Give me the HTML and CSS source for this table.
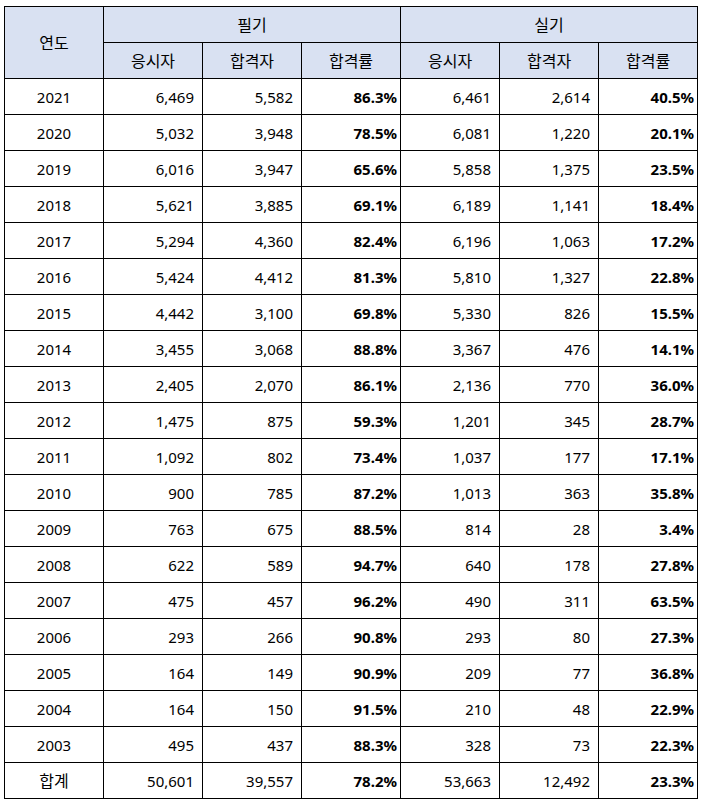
FILE: index.html
```html
<!DOCTYPE html>
<html lang="ko">
<head>
<meta charset="utf-8">
<title>연도별 합격률</title>
<link rel="stylesheet" href="styles.css">
</head>
<body>
<table class="stats">
  <colgroup>
    <col class="c"><col class="c"><col class="c"><col class="c"><col class="c"><col class="c"><col class="c">
  </colgroup>
  <thead>
    <tr>
      <th rowspan="2" class="year-h">연도</th>
      <th colspan="3">필기</th>
      <th colspan="3">실기</th>
    </tr>
    <tr>
      <th>응시자</th><th>합격자</th><th>합격률</th>
      <th>응시자</th><th>합격자</th><th>합격률</th>
    </tr>
  </thead>
  <tbody>
    <tr><td class="yr">2021</td><td class="n">6,469</td><td class="n">5,582</td><td class="p">86.3%</td><td class="n">6,461</td><td class="n">2,614</td><td class="p">40.5%</td></tr>
    <tr><td class="yr">2020</td><td class="n">5,032</td><td class="n">3,948</td><td class="p">78.5%</td><td class="n">6,081</td><td class="n">1,220</td><td class="p">20.1%</td></tr>
    <tr><td class="yr">2019</td><td class="n">6,016</td><td class="n">3,947</td><td class="p">65.6%</td><td class="n">5,858</td><td class="n">1,375</td><td class="p">23.5%</td></tr>
    <tr><td class="yr">2018</td><td class="n">5,621</td><td class="n">3,885</td><td class="p">69.1%</td><td class="n">6,189</td><td class="n">1,141</td><td class="p">18.4%</td></tr>
    <tr><td class="yr">2017</td><td class="n">5,294</td><td class="n">4,360</td><td class="p">82.4%</td><td class="n">6,196</td><td class="n">1,063</td><td class="p">17.2%</td></tr>
    <tr><td class="yr">2016</td><td class="n">5,424</td><td class="n">4,412</td><td class="p">81.3%</td><td class="n">5,810</td><td class="n">1,327</td><td class="p">22.8%</td></tr>
    <tr><td class="yr">2015</td><td class="n">4,442</td><td class="n">3,100</td><td class="p">69.8%</td><td class="n">5,330</td><td class="n">826</td><td class="p">15.5%</td></tr>
    <tr><td class="yr">2014</td><td class="n">3,455</td><td class="n">3,068</td><td class="p">88.8%</td><td class="n">3,367</td><td class="n">476</td><td class="p">14.1%</td></tr>
    <tr><td class="yr">2013</td><td class="n">2,405</td><td class="n">2,070</td><td class="p">86.1%</td><td class="n">2,136</td><td class="n">770</td><td class="p">36.0%</td></tr>
    <tr><td class="yr">2012</td><td class="n">1,475</td><td class="n">875</td><td class="p">59.3%</td><td class="n">1,201</td><td class="n">345</td><td class="p">28.7%</td></tr>
    <tr><td class="yr">2011</td><td class="n">1,092</td><td class="n">802</td><td class="p">73.4%</td><td class="n">1,037</td><td class="n">177</td><td class="p">17.1%</td></tr>
    <tr><td class="yr">2010</td><td class="n">900</td><td class="n">785</td><td class="p">87.2%</td><td class="n">1,013</td><td class="n">363</td><td class="p">35.8%</td></tr>
    <tr><td class="yr">2009</td><td class="n">763</td><td class="n">675</td><td class="p">88.5%</td><td class="n">814</td><td class="n">28</td><td class="p">3.4%</td></tr>
    <tr><td class="yr">2008</td><td class="n">622</td><td class="n">589</td><td class="p">94.7%</td><td class="n">640</td><td class="n">178</td><td class="p">27.8%</td></tr>
    <tr><td class="yr">2007</td><td class="n">475</td><td class="n">457</td><td class="p">96.2%</td><td class="n">490</td><td class="n">311</td><td class="p">63.5%</td></tr>
    <tr><td class="yr">2006</td><td class="n">293</td><td class="n">266</td><td class="p">90.8%</td><td class="n">293</td><td class="n">80</td><td class="p">27.3%</td></tr>
    <tr><td class="yr">2005</td><td class="n">164</td><td class="n">149</td><td class="p">90.9%</td><td class="n">209</td><td class="n">77</td><td class="p">36.8%</td></tr>
    <tr><td class="yr">2004</td><td class="n">164</td><td class="n">150</td><td class="p">91.5%</td><td class="n">210</td><td class="n">48</td><td class="p">22.9%</td></tr>
    <tr><td class="yr">2003</td><td class="n">495</td><td class="n">437</td><td class="p">88.3%</td><td class="n">328</td><td class="n">73</td><td class="p">22.3%</td></tr>
    <tr><td class="yr total">합계</td><td class="n">50,601</td><td class="n">39,557</td><td class="p">78.2%</td><td class="n">53,663</td><td class="n">12,492</td><td class="p">23.3%</td></tr>
  </tbody>
</table>
</body>
</html>
```
FILE: styles.css
```css
html, body {
  background: #ffffff;
}
body {
  margin: 0;
  padding: 6px 0 0 4px;
  font-family: "Noto Sans", "Noto Sans CJK KR", sans-serif;
  font-size: 15px;
  color: #000000;
}
.stats {
  border-collapse: collapse;
  table-layout: fixed;
  width: 694px;
}
.stats .c {
  width: 99px;
}
.stats th,
.stats td {
  border: 1px solid #000000;
  height: 36px;
  padding: 0;
  box-sizing: border-box;
  line-height: 20px;
  white-space: nowrap;
  overflow: hidden;
}
.stats th {
  background: #d9e1f2;
  font-weight: normal;
  font-size: 16px;
  text-align: center;
}
.stats .yr {
  text-align: center;
}
.stats .total {
  font-size: 16px;
}
.stats .n {
  text-align: right;
  padding-right: 8px;
}
.stats .p {
  text-align: right;
  padding-right: 3px;
  font-weight: bold;
}
```
